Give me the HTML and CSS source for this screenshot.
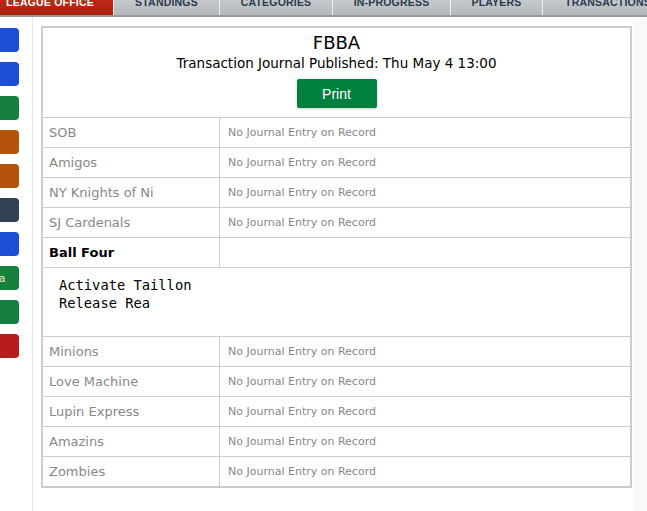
FILE: index.html
```html
<!DOCTYPE html>
<html>
<head>
    <meta charset="UTF-8">
    <meta name="viewport" content="width=device-width, initial-scale=1.0">
    <title>FBBA - Transaction Journal</title>
    <link rel="stylesheet" href="styles.css">
</head>
<body>
    <nav class="tabs">
        <a class="tab tab-office active">LEAGUE OFFICE</a>
        <a class="tab tab-standings">STANDINGS</a>
        <a class="tab tab-categories">CATEGORIES</a>
        <a class="tab tab-progress">IN-PROGRESS</a>
        <a class="tab tab-players">PLAYERS</a>
        <a class="tab tab-trans">TRANSACTIONS</a>
    </nav>
    <div class="layout">
        <aside class="side">
            <a class="side-btn blue"></a>
            <a class="side-btn blue"></a>
            <a class="side-btn green"></a>
            <a class="side-btn orange"></a>
            <a class="side-btn orange"></a>
            <a class="side-btn slate"></a>
            <a class="side-btn blue"></a>
            <a class="side-btn green">a</a>
            <a class="side-btn green"></a>
            <a class="side-btn red"></a>
        </aside>
        <main class="content">
            <table class="journal">
                <tr>
                    <td class="head" colspan="2">
                        <h1>FBBA</h1>
                        <div class="published">Transaction Journal Published: Thu May 4 13:00</div>
                        <button class="print">Print</button>
                    </td>
                </tr>
                <tr><td class="team">SOB</td><td class="entry">No Journal Entry on Record</td></tr>
                <tr><td class="team">Amigos</td><td class="entry">No Journal Entry on Record</td></tr>
                <tr><td class="team">NY Knights of Ni</td><td class="entry">No Journal Entry on Record</td></tr>
                <tr><td class="team">SJ Cardenals</td><td class="entry">No Journal Entry on Record</td></tr>
                <tr><td class="team has-entry">Ball Four</td><td class="entry"></td></tr>
                <tr>
                    <td class="moves" colspan="2"><pre>Activate Taillon
Release Rea</pre></td>
                </tr>
                <tr><td class="team">Minions</td><td class="entry">No Journal Entry on Record</td></tr>
                <tr><td class="team">Love Machine</td><td class="entry">No Journal Entry on Record</td></tr>
                <tr><td class="team">Lupin Express</td><td class="entry">No Journal Entry on Record</td></tr>
                <tr><td class="team">Amazins</td><td class="entry">No Journal Entry on Record</td></tr>
                <tr><td class="team">Zombies</td><td class="entry">No Journal Entry on Record</td></tr>
            </table>
        </main>
    </div>
</body>
</html>
```

FILE: styles.css
```css
body {
    margin: 0;
    padding: 0;
    font-family: "DejaVu Sans", Verdana, sans-serif;
    background-color: #fff;
    overflow: hidden;
}

.tabs {
    display: flex;
    margin-top: -12px;
    height: 27px;
    border-bottom: 2px solid #999;
    background: linear-gradient(#d4d7da, #b4b8bc);
}

.tab {
    display: block;
    height: 27px;
    line-height: 29px;
    text-align: center;
    font-family: "Liberation Sans", Arial, sans-serif;
    font-size: 10.5px;
    font-weight: bold;
    color: #2b3a4c;
    border-right: 1px solid #eef0f2;
    letter-spacing: 0.2px;
    flex: none;
}

.tab-office {
    width: 126px;
    margin-left: -13px;
    color: #fff;
    background: linear-gradient(#d0301a, #a8200f);
}

.tab-standings { width: 105px; }
.tab-categories { width: 112px; }
.tab-progress { width: 117px; }
.tab-players { width: 91px; }
.tab-trans { width: 130px; }

.layout {
    display: flex;
    min-height: 494px;
}

.side {
    width: 32px;
    border-right: 1px solid #e6e6e6;
    padding-top: 11px;
    display: flex;
    flex-direction: column;
    gap: 10px;
    flex: none;
}

.side-btn {
    display: block;
    width: 40px;
    height: 24px;
    margin-left: -21px;
    padding-right: 14px;
    box-sizing: border-box;
    border-radius: 4px;
    font-family: "Liberation Sans", Arial, sans-serif;
    font-size: 11px;
    line-height: 24px;
    text-align: right;
    color: #fdf3c0;
}

.blue { background-color: #1d4ed8; }
.green { background-color: #15803d; }
.orange { background-color: #b45309; }
.slate { background-color: #334155; }
.red { background-color: #b91c1c; }

.content {
    flex: 1;
    padding: 9px 0 0 8px;
    background: linear-gradient(to right, #fff 600px, #f9f9f9 600px);
}

.journal {
    width: 591px;
    border: 2px solid #ccc;
    border-spacing: 0;
    background-color: #fff;
}

.journal td {
    border-top: 1px solid #ccc;
    padding: 0;
}

.journal tr:first-child td {
    border-top: none;
}

.head {
    text-align: center;
    padding: 4px 0 9px 0 !important;
}

h1 {
    margin: 0;
    font-size: 18px;
    line-height: 22px;
    font-weight: normal;
    color: #000;
}

.published {
    font-size: 13.5px;
    line-height: 18px;
    color: #000;
}

.print {
    display: block;
    margin: 7px auto 0 auto;
    width: 80px;
    height: 29px;
    border: none;
    border-radius: 2px;
    background-color: #00803f;
    color: #fff;
    font-family: "Liberation Sans", Arial, sans-serif;
    font-size: 14px;
    box-shadow: 0 1px 3px rgba(0, 0, 0, 0.2);
}

.team {
    width: 170px;
    height: 29px;
    padding-left: 6px !important;
    font-size: 13px;
    color: #888;
    border-right: 1px solid #ccc;
}

.has-entry {
    color: #000;
    font-weight: bold;
}

.entry {
    padding-left: 8px !important;
    font-family: "DejaVu Sans", sans-serif;
    font-size: 11px;
    color: #888;
}

.moves pre {
    margin: 0;
    padding: 8px 16px 24px 16px;
    font-family: "DejaVu Sans Mono", monospace;
    font-size: 13.75px;
    line-height: 18px;
    color: #000;
}
```
